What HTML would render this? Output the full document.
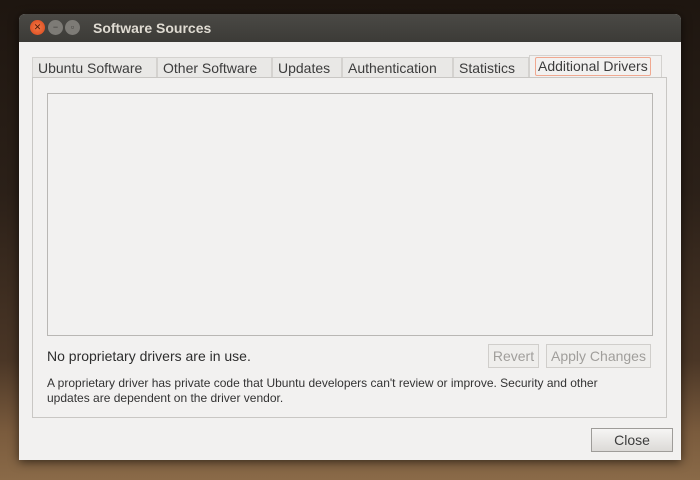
<!DOCTYPE html>
<html><head><style>
body{margin:0;width:700px;height:480px;overflow:hidden;position:relative;font-family:"Liberation Sans",sans-serif;
background:linear-gradient(180deg,#1e1610 0%,#2b2018 40%,#4a3626 75%,#7a5b3d 90%,#8a6a48 100%);}
.win{position:absolute;left:19px;top:14px;width:662px;height:446px;background:#f2f1f0;border-radius:6px 6px 0 0;box-shadow:0 2px 10px rgba(0,0,0,.6);overflow:hidden}
.tb{height:28px;background:linear-gradient(#4a4945,#3c3b37);color:#dfdbd2;font-weight:bold;font-size:14px;line-height:28px;padding-left:74px}
.b{position:absolute;top:6px;width:15px;height:15px;border-radius:50%;font-size:9px;line-height:15px;text-align:center}
.tabs{position:absolute;left:13px;top:41px;height:22px;font-size:14px;color:#3c3c3c}
.t{position:absolute;top:2px;height:20px;line-height:20px;border:1px solid #d4d2cf;border-bottom:none;background:#e9e8e6;padding:0 5px;box-sizing:border-box}
.frame{position:absolute;left:13px;top:63px;width:635px;height:341px;border:1px solid #c9c7c4;box-sizing:border-box;background:#f2f1f0}
.list{position:absolute;left:14px;top:15px;width:606px;height:243px;border:1px solid #b9b7b4;box-sizing:border-box;background:#f2f1f0}
.btn{position:absolute;border:1px solid #d0cecb;background:#efeeec;color:#a09e9b;font-size:14px;text-align:center;box-sizing:border-box}
</style></head><body>
<div class="win">
<div class="tb">Software Sources</div>
<div class="b" style="left:11px;background:radial-gradient(#f47a48,#d8461a);color:#4a1a08">✕</div>
<div class="b" style="left:29px;background:#7d7b76;color:#3c3b37">−</div>
<div class="b" style="left:46px;background:#7d7b76;color:#3c3b37">▫</div>
<div class="tabs">
<div class="t" style="left:0;width:125px">Ubuntu Software</div>
<div class="t" style="left:125px;width:115px">Other Software</div>
<div class="t" style="left:240px;width:70px">Updates</div>
<div class="t" style="left:310px;width:111px">Authentication</div>
<div class="t" style="left:421px;width:76px">Statistics</div>
<div class="t" style="left:497px;top:0;height:23px;width:133px;background:#f2f1f0;border-color:#d4d2cf"><span style="border:1px solid #f0a890;border-radius:2px;padding:0 2px;display:inline-block;line-height:17px;margin-top:1px">Additional Drivers</span></div>
</div>
<div class="frame">
<div class="list"></div>
<div style="position:absolute;left:14px;top:270px;font-size:14px;color:#2e2e2e">No proprietary drivers are in use.</div>
<div class="btn" style="left:455px;top:266px;width:51px;height:24px;line-height:22px">Revert</div>
<div class="btn" style="left:513px;top:266px;width:105px;height:24px;line-height:22px">Apply Changes</div>
<div style="position:absolute;left:14px;top:298px;width:585px;font-size:12px;line-height:15px;color:#333">A proprietary driver has private code that Ubuntu developers can't review or improve. Security and other updates are dependent on the driver vendor.</div>
</div>
<div class="btn" style="left:572px;top:414px;width:82px;height:24px;line-height:22px;color:#3c3c3c;border-color:#9e9c99;background:linear-gradient(#f6f5f4,#dcdad7)">Close</div>
</div>
</body></html>
